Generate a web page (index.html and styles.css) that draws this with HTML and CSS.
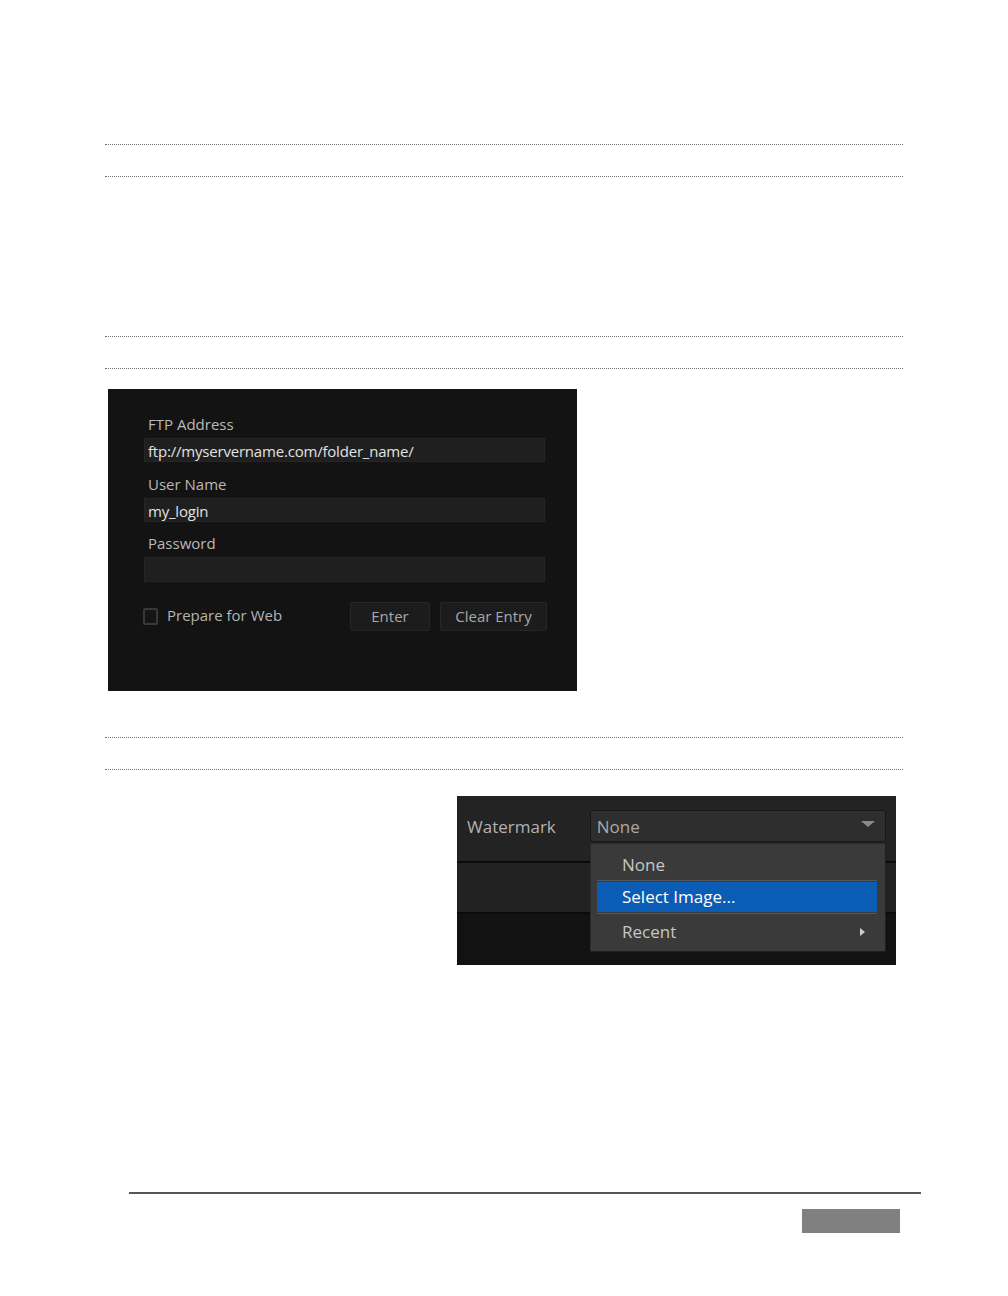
FILE: index.html
```html
<!DOCTYPE html>
<html>
<head>
<meta charset="utf-8">
<link rel="stylesheet" href="styles.css">
</head>
<body>
<div class="page">
  <div class="rulepair first"></div>
  <div class="rulepair second"></div>

  <div class="ftp">
    <div class="label">FTP Address</div>
    <div class="field">ftp://myservername.com/folder_name/</div>
    <div class="label gap">User Name</div>
    <div class="field">my_login</div>
    <div class="label gap">Password</div>
    <div class="field tall"></div>
    <div class="actions">
      <div class="check"><span class="box"></span><span class="check-text">Prepare for Web</span></div>
      <div class="buttons">
        <div class="btn enter">Enter</div>
        <div class="btn clear">Clear Entry</div>
      </div>
    </div>
  </div>

  <div class="rulepair third"></div>

  <div class="wm">
    <div class="wm-row top">
      <div class="wm-label">Watermark</div>
      <div class="select">
        <span>None</span>
        <svg class="caret" width="14" height="7" viewBox="0 0 14 7"><path d="M0 0H14L7 6Z" fill="#8a8a8a"/></svg>
      </div>
    </div>
    <div class="wm-row mid"></div>
    <div class="wm-row bottom"></div>
    <div class="menu">
      <div class="item first">None</div>
      <div class="sep"></div>
      <div class="item selected">Select Image...</div>
      <div class="sep"></div>
      <div class="item">Recent<svg class="sub" width="5" height="8" viewBox="0 0 5 8"><path d="M0 0L5 4L0 8Z" fill="#cfcfcf"/></svg></div>
    </div>
  </div>
</div>
<div class="footer">
  <div class="footline"></div>
  <div class="pagebox"></div>
</div>
</body>
</html>
```
FILE: styles.css
```css
html, body {
  margin: 0;
  padding: 0;
  background: #fff;
}
body {
  font-family: "Open Sans", "Noto Sans", sans-serif;
  width: 1008px;
  height: 1296px;
  position: relative;
}
.page {
  padding-left: 105px;
  width: 798px;
}
.rulepair {
  height: 31px;
  border-top: 1px dotted #6f6f6f;
  border-bottom: 1px dotted #6f6f6f;
}
.rulepair.first { margin-top: 144px; }
.rulepair.second { margin-top: 159px; }
.rulepair.third { margin-top: 46px; }

.ftp {
  margin-top: 20px;
  margin-left: 3px;
  width: 469px;
  height: 302px;
  box-sizing: border-box;
  background: #131313;
  padding: 24px 32px 0 36px;
}
.label {
  height: 22px;
  line-height: 22px;
  font-size: 15px;
  color: #b9b9b9;
  padding-left: 4px;
  margin-bottom: 3px;
}
.label.gap { margin-top: 11px; }
.label.gap:nth-of-type(5) { margin-top: 10px; }
.field {
  height: 24px;
  box-sizing: border-box;
  background: #1f1f1f;
  border: 1px solid #262626;
  line-height: 24px;
  font-size: 15px;
  color: #e2e2e2;
  padding-left: 3px;
  letter-spacing: -0.2px;
}
.field.tall { height: 25px; }
.actions {
  margin-top: 20px;
  display: flex;
  justify-content: space-between;
  align-items: center;
  height: 29px;
}
.check {
  display: flex;
  align-items: center;
  gap: 9px;
  margin-left: -1px;
  font-size: 15px;
  color: #b4b4b4;
}
.check-text { margin-top: -3px; }
.box {
  width: 15px;
  height: 17px;
  box-sizing: border-box;
  border: 2px solid #383838;
  background: #151515;
  border-radius: 2px;
  margin-top: -1px;
}
.buttons {
  display: flex;
  gap: 10px;
  margin-right: -2px;
}
.btn {
  height: 29px;
  box-sizing: border-box;
  background: #1c1c1c;
  border: 1px solid #262626;
  border-radius: 2px;
  text-align: center;
  line-height: 27px;
  font-size: 15px;
  color: #a8a8a8;
}
.btn.enter { width: 80px; }
.btn.clear { width: 107px; }

.wm {
  position: relative;
  margin-top: 26px;
  margin-left: 352px;
  width: 439px;
  height: 169px;
  background: #111;
}
.wm-row.top {
  height: 65px;
  background: #232323;
  border-bottom: 2px solid #0b0b0b;
  display: flex;
  align-items: flex-start;
}
.wm-row.mid {
  height: 49px;
  background: #222;
  border-bottom: 2px solid #0b0b0b;
}
.wm-row.bottom {
  height: 51px;
  background: #121212;
}
.wm-label {
  margin-left: 10px;
  margin-top: 18px;
  font-size: 17px;
  line-height: 26px;
  color: #b2b2b2;
}
.select {
  margin-left: 34px;
  margin-top: 14px;
  width: 296px;
  height: 32px;
  box-sizing: border-box;
  background: #2e2e2e;
  border: 1px solid #181818;
  border-radius: 2px;
  display: flex;
  align-items: center;
  justify-content: space-between;
  padding: 0 10px 0 6px;
  font-size: 17px;
  color: #a9a9a9;
}
.caret { margin-top: -3px; }
.menu {
  position: absolute;
  left: 133px;
  top: 47px;
  width: 296px;
  height: 109px;
  box-sizing: border-box;
  background: #3a3a3a;
  border: 1px solid #2a2a2a;
  border-right-color: #1e1e1e;
  border-bottom-color: #1e1e1e;
  padding: 0 8px 0 6px;
}
.item {
  height: 36px;
  line-height: 36px;
  padding-left: 25px;
  font-size: 17px;
  color: #c6c6c6;
  display: flex;
  align-items: center;
  justify-content: space-between;
  padding-right: 12px;
}
.item.first {
  box-sizing: border-box;
  padding-top: 5px;
}
.item.selected {
  height: 30px;
  line-height: 30px;
  background: #0b5cb5;
  color: #fff;
  margin: 1px 0;
}
.sep {
  height: 1px;
  background: #565656;
}

.footline {
  position: absolute;
  left: 129px;
  top: 1192px;
  width: 792px;
  height: 2px;
  background: #555;
}
.pagebox {
  position: absolute;
  left: 802px;
  top: 1209px;
  width: 98px;
  height: 24px;
  background: #808080;
}
```
